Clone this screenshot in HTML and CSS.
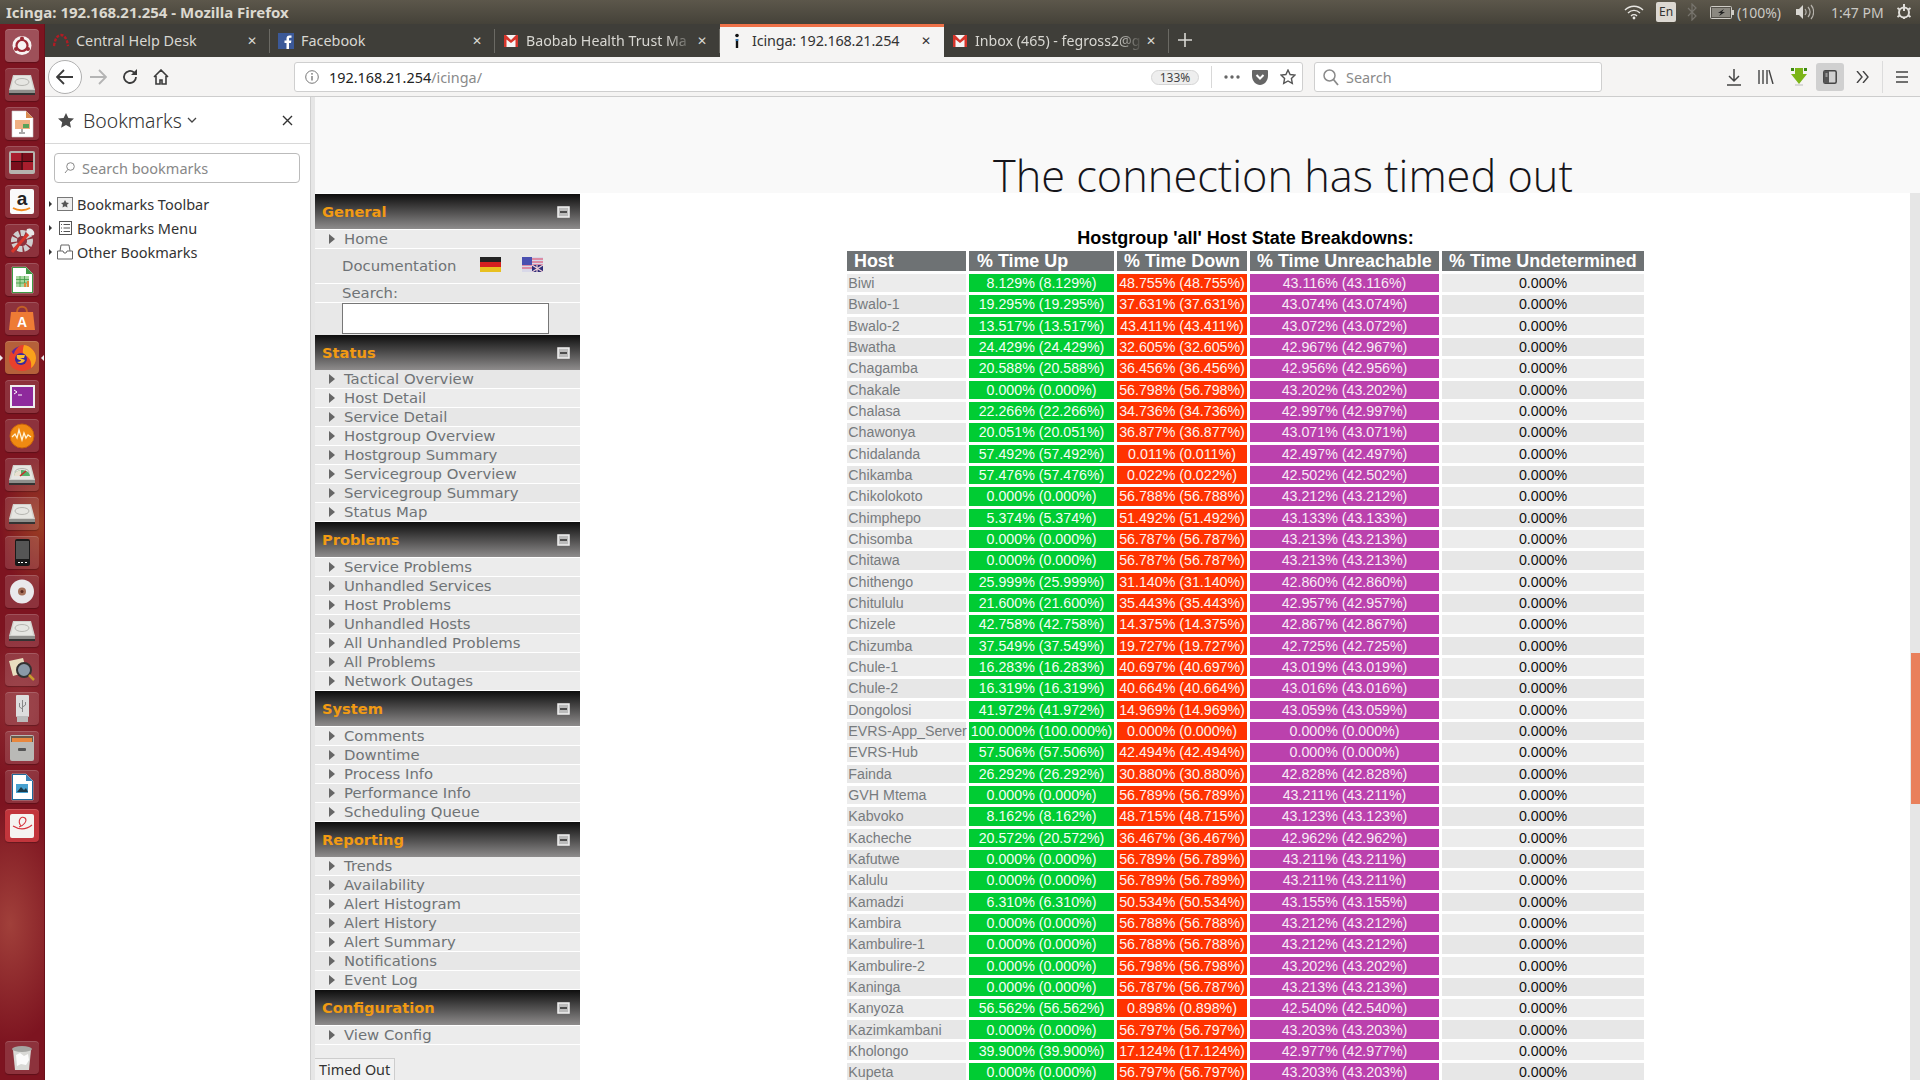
FILE: index.html
```html
<!DOCTYPE html>
<html lang="en">
<head>
  <meta charset="UTF-8" />
  <title>Icinga: 192.168.21.254 - Mozilla Firefox</title>
  <link rel="stylesheet" href="styles.css">
</head>
<body>

  <!-- shared launcher icons -->
  <svg class="defs" width="0" height="0">
    <symbol id="hdd" viewBox="0 0 34 33">
      <path d="M8 7h18l4 15v4H4v-4z" fill="#d2d2ce"/>
      <path d="M9 8h16l3 13H6z" fill="#e6e6e2"/>
      <ellipse cx="17" cy="14" rx="7" ry="3.5" fill="none" stroke="#b5b5b0"/>
      <path d="M4 22h26v4H4z" fill="#8f8f8c"/>
      <path d="M4 25h26v2H4z" fill="#333"/>
    </symbol>
    <symbol id="doc" viewBox="0 0 34 33">
      <path d="M7 4h14l7 7v19H7z" fill="#fff" stroke="#ccc" stroke-width=".6"/>
    </symbol>
  </svg>

  <!-- Top panel -->
  <div class="panel">
    <span class="panel-title">Icinga: 192.168.21.254 - Mozilla Firefox</span>
    <div class="indicators">
      <svg class="ind-wifi" width="20" height="16" viewBox="0 0 20 16"><path d="M1 6c5-5 13-5 18 0M4 9c3.500-3.500 8.500-3.500 12 0M7 12c1.700-1.700 4.300-1.700 6 0" fill="none" stroke="#e8e6e2" stroke-width="1.400"/><circle cx="10" cy="14" r="1.400" fill="#e8e6e2"/></svg>
      <span class="ind-lang">En</span>
      <svg class="ind-bt" width="10" height="18" viewBox="0 0 10 18"><path d="M1 5l8 8-4 4V1l4 4-8 8" fill="none" stroke="#77746d" stroke-width="1.200"/></svg>
      <svg class="ind-batt" width="24" height="13" viewBox="0 0 24 13"><rect x=".5" y=".5" width="21" height="12" rx="1" fill="#55524b" stroke="#cfccc6"/><rect x="2" y="2" width="18" height="9" fill="#8b8880"/><path d="M22 4h2v5h-2z" fill="#cfccc6"/><path d="M14 3L8 7h3l-2 3 6-4h-3z" fill="#222"/></svg>
      <span class="ind-pct">(100%)</span>
      <svg class="ind-vol" width="19" height="16" viewBox="0 0 19 16"><path d="M1 5h3l4-4v14l-4-4H1z" fill="#d8d6d1"/><path d="M10 5c1.500 2 1.500 4 0 6M13 3c2.500 3 2.500 7 0 10M16 1c3.500 4 3.500 10 0 14" fill="none" stroke="#b5b2ac" stroke-width="1.200"/></svg>
      <span class="ind-clock">1:47 PM</span>
      <svg class="ind-gear" width="16" height="16" viewBox="0 0 16 16"><circle cx="8" cy="8.500" r="5" fill="none" stroke="#e0ded9" stroke-width="2"/><path d="M8 0v7M1.500 4l2 1.500M14.500 4l-2 1.500M1.500 13l2-1.500M14.500 13l-2-1.500M8 15v-2" stroke="#e0ded9" stroke-width="2"/></svg>
    </div>
  </div>

  <div class="desktop">

    <!-- Launcher -->
    <div class="launcher">
      <div class="tile tile-bright"><svg viewBox="0 0 34 33"><circle cx="17" cy="16.500" r="9.500" fill="#f7f3f2"/><circle cx="17" cy="16.500" r="5.500" fill="none" stroke="#9c2a35" stroke-width="2.200"/><circle cx="17" cy="9.500" r="2" fill="#9c2a35"/><circle cx="11" cy="20" r="2" fill="#9c2a35"/><circle cx="23" cy="20" r="2" fill="#9c2a35"/></svg></div>
      <div class="tile"><svg viewBox="0 0 34 33"><use href="#hdd"/></svg></div>
      <div class="tile"><svg viewBox="0 0 34 33"><use href="#doc"/><path d="M21 4l7 7h-7z" fill="#d98a4f"/><path d="M10 13h15v9H10z" fill="#f0b183"/><path d="M18 17h6v4h-6z" fill="#5aa35a"/><path d="M17 22v3M14 26h6" stroke="#555"/></svg></div>
      <div class="tile"><svg viewBox="0 0 34 33"><rect x="4" y="5" width="26" height="23" rx="2" fill="#b5b3ae"/><rect x="6" y="7" width="22" height="17" fill="#7a0f1c"/><path d="M6 7h11v8H6zM18 16h10v8H18z" fill="#a81e2d"/><path d="M17 7v17M6 15.500h22" stroke="#2a0a0e" stroke-width="1"/></svg></div>
      <div class="tile"><svg viewBox="0 0 34 33"><rect x="5" y="4" width="24" height="25" rx="2" fill="#fafafa"/><text x="17" y="20" class="amazon-a">a</text><path d="M8 23c5 3 12 3 17 0" fill="none" stroke="#f08a1d" stroke-width="1.800"/></svg></div>
      <div class="tile"><svg viewBox="0 0 34 33"><circle cx="17" cy="17" r="8" fill="none" stroke="#cfcfcf" stroke-width="6" stroke-dasharray="4.500 1.500"/><path d="M7 28L24 9" stroke="#d8352a" stroke-width="3"/><path d="M22 5a5 5 0 0 1 7 6l-4 1-4-4z" fill="#e8e8e8"/></svg></div>
      <div class="tile"><svg viewBox="0 0 34 33"><use href="#doc"/><path d="M21 4l7 7h-7z" fill="#3f9a45"/><path d="M7 4h14v1H8v24h19V11h1v19H7z" fill="#3f9a45"/><path d="M11 13h13v11H11z" fill="#a8d8a0"/><path d="M11 16.500h13M11 20h13M15 13v11M19.500 13v11" stroke="#3f9a45" stroke-width=".8"/><path d="M19 24v-4h2v4zM22 24v-6h2v6z" fill="#e08a3c"/></svg></div>
      <div class="tile"><svg viewBox="0 0 34 33"><path d="M6 10h22l2 18H4z" fill="#ee7b35"/><path d="M12 10c0-7 10-7 10 0" fill="none" stroke="#c45f25" stroke-width="2"/><text x="17" y="25" class="store-a">A</text></svg></div>
      <div class="tile tile-active"><svg viewBox="0 0 34 33"><circle cx="17" cy="17" r="12" fill="#5a2a9c"/><path d="M17 4c8 0 14 6 14 13 0 8-6 13-14 13S4 25 4 18c0-3 1-6 3-8 0 2 1 3 2 3 1-4 4-8 8-9z" fill="#e8402c"/><path d="M19 4c7 1 12 7 12 13 0 4-2 8-5 10 1-6-1-11-7-13-2-2-1-7 0-10z" fill="#f9a11b"/><circle cx="16" cy="18" r="6" fill="#3b2a9c"/><path d="M12 14h8l-1 3h-4l5 2c-1 3-5 4-8 2 3 0 4-1 4-2-3 0-5-2-4-5z" fill="#fbc02d"/></svg></div>
      <div class="tile"><svg viewBox="0 0 34 33"><rect x="5" y="5" width="25" height="23" fill="#eee"/><rect x="7" y="7" width="21" height="19" fill="#8e2a9c"/><path d="M9 10l3 2-3 2M13 15h4" fill="none" stroke="#fff"/></svg></div>
      <div class="tile"><svg viewBox="0 0 34 33"><circle cx="17" cy="17" r="12" fill="#f08a12"/><circle cx="17" cy="17" r="12" fill="none" stroke="#c9620a"/><path d="M7 18l3-3 2 4 2-8 3 10 2-7 2 5 2-3 3 2" fill="none" stroke="#fff3d8" stroke-width="1.300"/></svg></div>
      <div class="tile"><svg viewBox="0 0 34 33"><use href="#hdd"/><path d="M9 18a8 6 0 0 1 16 0z" fill="#56b06a"/><path d="M9 18a8 6 0 0 1 7-6v6z" fill="#e8e0d0"/><path d="M15 18l6-5" stroke="#c92a2a" stroke-width="1.500"/></svg></div>
      <div class="tile"><svg viewBox="0 0 34 33"><use href="#hdd"/></svg></div>
      <div class="tile"><svg viewBox="0 0 34 33"><rect x="10" y="3" width="15" height="27" rx="2" fill="#1a1a1a"/><rect x="11" y="5" width="13" height="18" fill="#555"/><path d="M13 26h2v1h-2zM16 26h2v1h-2zM20 26h2v1h-2z" fill="#fff"/></svg></div>
      <div class="tile"><svg viewBox="0 0 34 33"><circle cx="17" cy="16.500" r="12" fill="#e9e9ec"/><circle cx="17" cy="16.500" r="4" fill="#a5705a"/><circle cx="17" cy="16.500" r="1.500" fill="#5a2a20"/></svg></div>
      <div class="tile"><svg viewBox="0 0 34 33"><use href="#hdd"/></svg></div>
      <div class="tile"><svg viewBox="0 0 34 33"><path d="M4 8l14-3 4 14-14 4z" fill="#e9dfc0"/><circle cx="19" cy="17" r="7" fill="#8a9aa8" stroke="#333" stroke-width="2"/><path d="M24 22l5 5" stroke="#c99a2e" stroke-width="2.500"/></svg></div>
      <div class="tile"><svg viewBox="0 0 34 33"><rect x="11" y="3" width="13" height="22" rx="1" fill="#ddd"/><rect x="12" y="24" width="11" height="6" fill="#bbb"/><path d="M17.500 8v12M14.500 11v4l3 2M20.500 10v3l-3 2" fill="none" stroke="#888"/></svg></div>
      <div class="tile"><svg viewBox="0 0 34 33"><rect x="5" y="4" width="24" height="26" rx="2" fill="#b9b9b6"/><path d="M6 5h22v6H6z" fill="#6b5a4a"/><path d="M7 7h20v4H7z" fill="#e8873e"/><rect x="13" y="17" width="8" height="3" rx="1" fill="#555"/></svg></div>
      <div class="tile"><svg viewBox="0 0 34 33"><use href="#doc"/><path d="M21 4l7 7h-7z" fill="#3a84b8"/><path d="M7 4h14v1H8v24h19V11h1v19H7z" fill="#1f6a9c"/><path d="M11 14h12v9H11z" fill="#46a0d0"/><path d="M12 22l4-5 3 3 2-2 2 4z" fill="#1c3a4a"/></svg></div>
      <div class="tile tile-red"><svg viewBox="0 0 34 33"><rect x="5" y="5" width="24" height="24" rx="2" fill="#f5f3f1"/><path d="M8 17c8 5 14 3 19-1M16 17c-4-5 0-11 4-8 3 3-2 8-6 9" fill="none" stroke="#d6303a" stroke-width="1.100"/></svg></div>
      <div class="tile tile-trash"><svg viewBox="0 0 34 33"><path d="M8 9h18l-2 20H10z" fill="#d9d9d6"/><ellipse cx="17" cy="8" rx="10" ry="3" fill="#a5a5a2"/><path d="M11 14l4-2 4 3 4-2 1 6-3 5-5-1-4 2z" fill="#fbfbfb"/></svg></div>
    </div>

    <div class="firefox">

      <!-- Tab strip -->
      <div class="tabbar">
        <div class="tab">
          <svg class="favicon" width="16" height="16" viewBox="0 0 16 16"><path d="M1 13C2 5 5 2 8 2s6 3 7 11" fill="none" stroke="#b01c24" stroke-width="2.400" stroke-dasharray="3 1.500"/></svg>
          <span class="tab-title">Central Help Desk</span>
          <span class="tab-close">✕</span>
        </div>
        <div class="tab">
          <svg class="favicon" width="16" height="16" viewBox="0 0 16 16"><rect width="16" height="16" fill="#3b5998"/><path d="M11 16v-6h2l.4-2.500H11V6c0-.8.300-1.200 1.200-1.200h1.300V2.500H11.500C9.500 2.500 8.500 3.700 8.500 5.600v1.900H6.500V10h2v6z" fill="#fff"/></svg>
          <span class="tab-title">Facebook</span>
          <span class="tab-close">✕</span>
        </div>
        <div class="tab">
          <svg class="favicon" width="16" height="16" viewBox="0 0 16 16"><rect x="1" y="2" width="14" height="12" fill="#f5f5f5"/><path d="M1 2h2l5 5 5-5h2v12h-2.500V6.500L8 10 3.500 6.500V14H1z" fill="#d6352b"/></svg>
          <span class="tab-title tab-fade">Baobab Health Trust Ma</span>
          <span class="tab-close">✕</span>
        </div>
        <div class="tab tab-current">
          <svg class="favicon" width="16" height="16" viewBox="0 0 16 16"><circle cx="8" cy="2.500" r="1.800" fill="#111"/><path d="M6.800 6h2.400v9H6.800z" fill="#111"/><path d="M6.800 6h2.400v2H6.800z" fill="#2a6fb0"/></svg>
          <span class="tab-title">Icinga: 192.168.21.254</span>
          <span class="tab-close">✕</span>
        </div>
        <div class="tab">
          <svg class="favicon" width="16" height="16" viewBox="0 0 16 16"><rect x="1" y="2" width="14" height="12" fill="#f5f5f5"/><path d="M1 2h2l5 5 5-5h2v12h-2.500V6.500L8 10 3.500 6.500V14H1z" fill="#d6352b"/></svg>
          <span class="tab-title tab-fade">Inbox (465) - fegross2@g</span>
          <span class="tab-close">✕</span>
        </div>
        <svg class="tab-new" width="14" height="14" viewBox="0 0 14 14"><path d="M7 0v14M0 7h14" stroke="#d9d8d3" stroke-width="1.600"/></svg>
      </div>

      <!-- Toolbar -->
      <div class="toolbar">
        <div class="nav-back"><svg width="18" height="16" viewBox="0 0 18 16"><path d="M8 1L1 8l7 7M1 8h16" fill="none" stroke="#3b3b3b" stroke-width="1.800"/></svg></div>
        <svg class="nav-icon" width="18" height="16" viewBox="0 0 18 16"><path d="M10 1l7 7-7 7M17 8H1" fill="none" stroke="#b4b4b4" stroke-width="1.800"/></svg>
        <svg class="nav-icon" width="16" height="16" viewBox="0 0 16 16"><path d="M14 8a6 6 0 1 1-2-4.500" fill="none" stroke="#3b3b3b" stroke-width="1.800"/><path d="M15 0v6H9z" fill="#3b3b3b"/></svg>
        <svg class="nav-icon" width="16" height="16" viewBox="0 0 16 16"><path d="M1 8l7-7 7 7M3 7v8h4v-4h2v4h4V7" fill="none" stroke="#3b3b3b" stroke-width="1.600"/></svg>

        <div class="urlbar">
          <svg class="url-info" width="14" height="14" viewBox="0 0 14 14"><circle cx="7" cy="7" r="6.300" fill="none" stroke="#777"/><path d="M7 6v4.500" stroke="#777" stroke-width="1.400"/><circle cx="7" cy="3.800" r=".9" fill="#777"/></svg>
          <span class="url-text">192.168.21.254<span class="url-path">/icinga/</span></span>
          <span class="url-zoom">133%</span>
          <span class="url-sep"></span>
          <svg class="url-dots" width="16" height="4" viewBox="0 0 16 4"><circle cx="2" cy="2" r="1.700" fill="#666"/><circle cx="8" cy="2" r="1.700" fill="#666"/><circle cx="14" cy="2" r="1.700" fill="#666"/></svg>
          <svg class="url-pocket" width="16" height="15" viewBox="0 0 16 15"><path d="M1 0h14a1 1 0 0 1 1 1v5c0 5-4 9-8 9S0 11 0 6V1a1 1 0 0 1 1-1z" fill="#666"/><path d="M4.500 5L8 8.500 11.500 5" fill="none" stroke="#fff" stroke-width="2"/></svg>
          <svg class="url-star" width="16" height="16" viewBox="0 0 16 16"><path d="M8 1l2.100 4.500 4.900.6-3.600 3.400.9 4.900L8 12l-4.300 2.400.9-4.900L1 6.100l4.900-.6z" fill="none" stroke="#555" stroke-width="1.400"/></svg>
        </div>

        <div class="searchbar">
          <svg width="16" height="17" viewBox="0 0 16 17"><circle cx="6.500" cy="6.500" r="5.500" fill="none" stroke="#8a8a8a" stroke-width="1.500"/><path d="M10.500 10.500L15 16" stroke="#8a8a8a" stroke-width="1.800"/></svg>
          <span>Search</span>
        </div>

        <div class="tools">
          <svg width="14" height="17" viewBox="0 0 14 17"><path d="M7 0v11M2 7l5 5 5-5M0 16h14" fill="none" stroke="#444" stroke-width="1.500"/></svg>
          <svg width="16" height="14" viewBox="0 0 16 14"><path d="M1 0v14M5 0v14M9 0v14M11 0l4 14" fill="none" stroke="#444" stroke-width="1.400"/></svg>
          <svg width="16" height="18" viewBox="0 0 16 18"><path d="M4 0h8v6h4l-8 10L0 6h4z" fill="#7cb518"/><path d="M0 0h3v3H0zM13 0h3v3h-3z" fill="#3d8a12"/><path d="M4 17h8" stroke="#bbb"/></svg>
          <span class="tool-on"><svg width="14" height="14" viewBox="0 0 14 14"><rect x=".8" y=".8" width="12.400" height="12.400" rx="1.500" fill="none" stroke="#444" stroke-width="1.500"/><path d="M1 1h5v12H1z" fill="#555"/><path d="M2.500 4h2M2.500 6h2" stroke="#ddd"/></svg></span>
          <svg width="13" height="12" viewBox="0 0 13 12"><path d="M1 0l5 6-5 6M7 0l5 6-5 6" fill="none" stroke="#444" stroke-width="1.400"/></svg>
          <span class="tool-sep"></span>
          <svg width="12" height="12" viewBox="0 0 12 12"><path d="M0 1h12M0 6h12M0 11h12" stroke="#444" stroke-width="1.500"/></svg>
        </div>
      </div>

      <div class="browser">

        <!-- Bookmarks sidebar -->
        <div class="sidebar">
          <div class="side-head">
            <svg width="16" height="15" viewBox="0 0 16 15"><path d="M8 0l2.400 5 5.600.6-4.100 3.700 1.100 5.500L8 12l-4.900 2.800 1.100-5.500L0 5.600 5.600 5z" fill="#4a4a4a"/></svg>
            <span class="side-title">Bookmarks</span>
            <svg class="side-chev" width="10" height="6" viewBox="0 0 10 6"><path d="M1 1l4 4 4-4" fill="none" stroke="#444" stroke-width="1.300"/></svg>
            <svg class="side-x" width="11" height="11" viewBox="0 0 11 11"><path d="M1 1l9 9M10 1l-9 9" stroke="#333" stroke-width="1.400"/></svg>
          </div>
          <div class="side-search">
            <svg width="11" height="12" viewBox="0 0 11 12"><circle cx="6.500" cy="4.500" r="3.800" fill="none" stroke="#888"/><path d="M3.800 7.500L1 11" stroke="#888"/></svg>
            <span>Search bookmarks</span>
          </div>
          <ul class="tree">
            <li><i class="tree-arrow"></i><svg width="16" height="14" viewBox="0 0 16 14"><rect x=".5" y=".5" width="15" height="13" fill="#eee" stroke="#777"/><path d="M8 3l1.300 2.500 2.700.4-2 1.900.5 2.700L8 9.200l-2.500 1.300.5-2.700-2-1.900 2.700-.4z" fill="#555"/></svg>Bookmarks Toolbar</li>
            <li><i class="tree-arrow"></i><svg width="16" height="14" viewBox="0 0 16 14"><rect x="2.500" y=".5" width="12" height="13" fill="#fff" stroke="#555"/><path d="M4 3.500h1M6.500 3.500H13M4 7h1M6.500 7H13M4 10.500h1M6.500 10.500H13" stroke="#555"/></svg>Bookmarks Menu</li>
            <li><i class="tree-arrow"></i><svg width="16" height="16" viewBox="0 0 16 16"><path d="M4 1h8l1 6h2.500v8H.5V7H3zM3 7h3l1 2h2l1-2h3" fill="none" stroke="#666"/></svg>Other Bookmarks</li>
          </ul>
        </div>
        <div class="splitter"></div>

        <div class="content">
          <div class="error-band"><h1>The connection has timed out</h1></div>

          <div class="frames">
            <!-- Icinga side menu -->
            <div class="menu">
              <div class="menu-head">General<svg width="13" height="12" viewBox="0 0 13 12"><rect x="1" y="1" width="11" height="10" fill="#bbb" stroke="#f2f2f2" stroke-width="1.500"/><path d="M3 6h7" stroke="#333" stroke-width="1.600"/></svg></div>
              <div class="menu-row"><i></i>Home</div>
              <div class="menu-row doc-row"><span>Documentation</span>
                <svg class="flag" width="21" height="15" viewBox="0 0 21 15"><path d="M0 0h21v5H0z" fill="#222"/><path d="M0 5h21v5H0z" fill="#d42020"/><path d="M0 10h21v5H0z" fill="#e8c020"/></svg>
                <svg class="flag" width="21" height="15" viewBox="0 0 21 15"><path d="M0 0h21v15H0z" fill="#d8d8e8"/><path d="M0 2h21M0 5h21M0 8h21M0 11h21" stroke="#e04060" stroke-width="1.200"/><path d="M0 0h10v8H0z" fill="#4a50b0"/><path d="M10 8h11v7H10z" fill="#30307a"/><path d="M10 8l11 7M21 8l-11 7M15 8v7" stroke="#f0d0d8" stroke-width="1.200"/></svg>
              </div>
              <div class="menu-row search-label"><span>Search:</span></div>
              <div class="menu-input"><input type="text"></div>

              <div class="menu-head menu-head-tight">Status<svg width="13" height="12" viewBox="0 0 13 12"><rect x="1" y="1" width="11" height="10" fill="#bbb" stroke="#f2f2f2" stroke-width="1.500"/><path d="M3 6h7" stroke="#333" stroke-width="1.600"/></svg></div>
              <div class="menu-row"><i></i>Tactical Overview</div>
              <div class="menu-row"><i></i>Host Detail</div>
              <div class="menu-row"><i></i>Service Detail</div>
              <div class="menu-row"><i></i>Hostgroup Overview</div>
              <div class="menu-row"><i></i>Hostgroup Summary</div>
              <div class="menu-row"><i></i>Servicegroup Overview</div>
              <div class="menu-row"><i></i>Servicegroup Summary</div>
              <div class="menu-row"><i></i>Status Map</div>

              <div class="menu-head">Problems<svg width="13" height="12" viewBox="0 0 13 12"><rect x="1" y="1" width="11" height="10" fill="#bbb" stroke="#f2f2f2" stroke-width="1.500"/><path d="M3 6h7" stroke="#333" stroke-width="1.600"/></svg></div>
              <div class="menu-row"><i></i>Service Problems</div>
              <div class="menu-row"><i></i>Unhandled Services</div>
              <div class="menu-row"><i></i>Host Problems</div>
              <div class="menu-row"><i></i>Unhandled Hosts</div>
              <div class="menu-row"><i></i>All Unhandled Problems</div>
              <div class="menu-row"><i></i>All Problems</div>
              <div class="menu-row"><i></i>Network Outages</div>

              <div class="menu-head">System<svg width="13" height="12" viewBox="0 0 13 12"><rect x="1" y="1" width="11" height="10" fill="#bbb" stroke="#f2f2f2" stroke-width="1.500"/><path d="M3 6h7" stroke="#333" stroke-width="1.600"/></svg></div>
              <div class="menu-row"><i></i>Comments</div>
              <div class="menu-row"><i></i>Downtime</div>
              <div class="menu-row"><i></i>Process Info</div>
              <div class="menu-row"><i></i>Performance Info</div>
              <div class="menu-row"><i></i>Scheduling Queue</div>

              <div class="menu-head menu-head-tight">Reporting<svg width="13" height="12" viewBox="0 0 13 12"><rect x="1" y="1" width="11" height="10" fill="#bbb" stroke="#f2f2f2" stroke-width="1.500"/><path d="M3 6h7" stroke="#333" stroke-width="1.600"/></svg></div>
              <div class="menu-row"><i></i>Trends</div>
              <div class="menu-row"><i></i>Availability</div>
              <div class="menu-row"><i></i>Alert Histogram</div>
              <div class="menu-row"><i></i>Alert History</div>
              <div class="menu-row"><i></i>Alert Summary</div>
              <div class="menu-row"><i></i>Notifications</div>
              <div class="menu-row"><i></i>Event Log</div>

              <div class="menu-head">Configuration<svg width="13" height="12" viewBox="0 0 13 12"><rect x="1" y="1" width="11" height="10" fill="#bbb" stroke="#f2f2f2" stroke-width="1.500"/><path d="M3 6h7" stroke="#333" stroke-width="1.600"/></svg></div>
              <div class="menu-row"><i></i>View Config</div>

              <div class="menu-fill"><span class="status-tab">Timed Out</span></div>
            </div>

            <!-- Availability report -->
            <div class="report">
              <div class="report-title">Hostgroup 'all' Host State Breakdowns:</div>
              <table class="avail">
                <colgroup><col class="c-host"><col class="c-up"><col class="c-down"><col class="c-unreach"><col class="c-undet"></colgroup>
                <thead><tr><th>Host</th><th>% Time Up</th><th>% Time Down</th><th>% Time Unreachable</th><th>% Time Undetermined</th></tr></thead>
                <tbody>
                  <tr><td>Biwi</td><td class="up">8.129% (8.129%)</td><td class="down">48.755% (48.755%)</td><td class="unreach">43.116% (43.116%)</td><td class="undet">0.000%</td></tr>
                  <tr><td>Bwalo-1</td><td class="up">19.295% (19.295%)</td><td class="down">37.631% (37.631%)</td><td class="unreach">43.074% (43.074%)</td><td class="undet">0.000%</td></tr>
                  <tr><td>Bwalo-2</td><td class="up">13.517% (13.517%)</td><td class="down">43.411% (43.411%)</td><td class="unreach">43.072% (43.072%)</td><td class="undet">0.000%</td></tr>
                  <tr><td>Bwatha</td><td class="up">24.429% (24.429%)</td><td class="down">32.605% (32.605%)</td><td class="unreach">42.967% (42.967%)</td><td class="undet">0.000%</td></tr>
                  <tr><td>Chagamba</td><td class="up">20.588% (20.588%)</td><td class="down">36.456% (36.456%)</td><td class="unreach">42.956% (42.956%)</td><td class="undet">0.000%</td></tr>
                  <tr><td>Chakale</td><td class="up">0.000% (0.000%)</td><td class="down">56.798% (56.798%)</td><td class="unreach">43.202% (43.202%)</td><td class="undet">0.000%</td></tr>
                  <tr><td>Chalasa</td><td class="up">22.266% (22.266%)</td><td class="down">34.736% (34.736%)</td><td class="unreach">42.997% (42.997%)</td><td class="undet">0.000%</td></tr>
                  <tr><td>Chawonya</td><td class="up">20.051% (20.051%)</td><td class="down">36.877% (36.877%)</td><td class="unreach">43.071% (43.071%)</td><td class="undet">0.000%</td></tr>
                  <tr><td>Chidalanda</td><td class="up">57.492% (57.492%)</td><td class="down">0.011% (0.011%)</td><td class="unreach">42.497% (42.497%)</td><td class="undet">0.000%</td></tr>
                  <tr><td>Chikamba</td><td class="up">57.476% (57.476%)</td><td class="down">0.022% (0.022%)</td><td class="unreach">42.502% (42.502%)</td><td class="undet">0.000%</td></tr>
                  <tr><td>Chikolokoto</td><td class="up">0.000% (0.000%)</td><td class="down">56.788% (56.788%)</td><td class="unreach">43.212% (43.212%)</td><td class="undet">0.000%</td></tr>
                  <tr><td>Chimphepo</td><td class="up">5.374% (5.374%)</td><td class="down">51.492% (51.492%)</td><td class="unreach">43.133% (43.133%)</td><td class="undet">0.000%</td></tr>
                  <tr><td>Chisomba</td><td class="up">0.000% (0.000%)</td><td class="down">56.787% (56.787%)</td><td class="unreach">43.213% (43.213%)</td><td class="undet">0.000%</td></tr>
                  <tr><td>Chitawa</td><td class="up">0.000% (0.000%)</td><td class="down">56.787% (56.787%)</td><td class="unreach">43.213% (43.213%)</td><td class="undet">0.000%</td></tr>
                  <tr><td>Chithengo</td><td class="up">25.999% (25.999%)</td><td class="down">31.140% (31.140%)</td><td class="unreach">42.860% (42.860%)</td><td class="undet">0.000%</td></tr>
                  <tr><td>Chitululu</td><td class="up">21.600% (21.600%)</td><td class="down">35.443% (35.443%)</td><td class="unreach">42.957% (42.957%)</td><td class="undet">0.000%</td></tr>
                  <tr><td>Chizele</td><td class="up">42.758% (42.758%)</td><td class="down">14.375% (14.375%)</td><td class="unreach">42.867% (42.867%)</td><td class="undet">0.000%</td></tr>
                  <tr><td>Chizumba</td><td class="up">37.549% (37.549%)</td><td class="down">19.727% (19.727%)</td><td class="unreach">42.725% (42.725%)</td><td class="undet">0.000%</td></tr>
                  <tr><td>Chule-1</td><td class="up">16.283% (16.283%)</td><td class="down">40.697% (40.697%)</td><td class="unreach">43.019% (43.019%)</td><td class="undet">0.000%</td></tr>
                  <tr><td>Chule-2</td><td class="up">16.319% (16.319%)</td><td class="down">40.664% (40.664%)</td><td class="unreach">43.016% (43.016%)</td><td class="undet">0.000%</td></tr>
                  <tr><td>Dongolosi</td><td class="up">41.972% (41.972%)</td><td class="down">14.969% (14.969%)</td><td class="unreach">43.059% (43.059%)</td><td class="undet">0.000%</td></tr>
                  <tr><td>EVRS-App_Server</td><td class="up">100.000% (100.000%)</td><td class="down">0.000% (0.000%)</td><td class="unreach">0.000% (0.000%)</td><td class="undet">0.000%</td></tr>
                  <tr><td>EVRS-Hub</td><td class="up">57.506% (57.506%)</td><td class="down">42.494% (42.494%)</td><td class="unreach">0.000% (0.000%)</td><td class="undet">0.000%</td></tr>
                  <tr><td>Fainda</td><td class="up">26.292% (26.292%)</td><td class="down">30.880% (30.880%)</td><td class="unreach">42.828% (42.828%)</td><td class="undet">0.000%</td></tr>
                  <tr><td>GVH Mtema</td><td class="up">0.000% (0.000%)</td><td class="down">56.789% (56.789%)</td><td class="unreach">43.211% (43.211%)</td><td class="undet">0.000%</td></tr>
                  <tr><td>Kabvoko</td><td class="up">8.162% (8.162%)</td><td class="down">48.715% (48.715%)</td><td class="unreach">43.123% (43.123%)</td><td class="undet">0.000%</td></tr>
                  <tr><td>Kacheche</td><td class="up">20.572% (20.572%)</td><td class="down">36.467% (36.467%)</td><td class="unreach">42.962% (42.962%)</td><td class="undet">0.000%</td></tr>
                  <tr><td>Kafutwe</td><td class="up">0.000% (0.000%)</td><td class="down">56.789% (56.789%)</td><td class="unreach">43.211% (43.211%)</td><td class="undet">0.000%</td></tr>
                  <tr><td>Kalulu</td><td class="up">0.000% (0.000%)</td><td class="down">56.789% (56.789%)</td><td class="unreach">43.211% (43.211%)</td><td class="undet">0.000%</td></tr>
                  <tr><td>Kamadzi</td><td class="up">6.310% (6.310%)</td><td class="down">50.534% (50.534%)</td><td class="unreach">43.155% (43.155%)</td><td class="undet">0.000%</td></tr>
                  <tr><td>Kambira</td><td class="up">0.000% (0.000%)</td><td class="down">56.788% (56.788%)</td><td class="unreach">43.212% (43.212%)</td><td class="undet">0.000%</td></tr>
                  <tr><td>Kambulire-1</td><td class="up">0.000% (0.000%)</td><td class="down">56.788% (56.788%)</td><td class="unreach">43.212% (43.212%)</td><td class="undet">0.000%</td></tr>
                  <tr><td>Kambulire-2</td><td class="up">0.000% (0.000%)</td><td class="down">56.798% (56.798%)</td><td class="unreach">43.202% (43.202%)</td><td class="undet">0.000%</td></tr>
                  <tr><td>Kaninga</td><td class="up">0.000% (0.000%)</td><td class="down">56.787% (56.787%)</td><td class="unreach">43.213% (43.213%)</td><td class="undet">0.000%</td></tr>
                  <tr><td>Kanyoza</td><td class="up">56.562% (56.562%)</td><td class="down">0.898% (0.898%)</td><td class="unreach">42.540% (42.540%)</td><td class="undet">0.000%</td></tr>
                  <tr><td>Kazimkambani</td><td class="up">0.000% (0.000%)</td><td class="down">56.797% (56.797%)</td><td class="unreach">43.203% (43.203%)</td><td class="undet">0.000%</td></tr>
                  <tr><td>Kholongo</td><td class="up">39.900% (39.900%)</td><td class="down">17.124% (17.124%)</td><td class="unreach">42.977% (42.977%)</td><td class="undet">0.000%</td></tr>
                  <tr><td>Kupeta</td><td class="up">0.000% (0.000%)</td><td class="down">56.797% (56.797%)</td><td class="unreach">43.203% (43.203%)</td><td class="undet">0.000%</td></tr>
                </tbody>
              </table>
            </div>

            <div class="scroll-track"><div class="scroll-thumb"></div></div>
          </div>
        </div>
      </div>
    </div>
  </div>

</body>
</html>
```

FILE: styles.css
```css
* {
  box-sizing: border-box;
}

html, body {
  margin: 0;
  width: 1920px;
  height: 1080px;
  overflow: hidden;
}

body {
  display: flex;
  flex-direction: column;
  font-family: 'Noto Sans', sans-serif;
  background: #fff;
}

.defs {
  position: absolute;
}

/* Top panel */
.panel {
  height: 24px;
  flex: none;
  display: flex;
  align-items: center;
  justify-content: space-between;
  padding-left: 6px;
  background: linear-gradient(to bottom, #5c574b, #454239);
}

.panel-title {
  font-size: 15px;
  font-weight: 700;
  color: #dcd9d0;
}

.indicators {
  display: flex;
  align-items: center;
  color: #cbc9c4;
  font-size: 14px;
}

.ind-lang {
  width: 20px;
  height: 20px;
  margin-left: 12px;
  border-radius: 2px;
  background: #dcd8d2;
  color: #333;
  font-size: 12px;
  text-align: center;
  line-height: 20px;
}

.ind-bt { margin-left: 11px; }
.ind-batt { margin-left: 13px; }
.ind-pct { margin-left: 3px; width: 46px; }
.ind-vol { margin-left: 12px; }
.ind-clock { margin-left: 17px; width: 53px; white-space: nowrap; }
.ind-gear { margin: 0 8px 0 12px; }

.desktop {
  flex: 1;
  display: flex;
  min-height: 0;
}

/* Launcher */
.launcher {
  width: 45px;
  flex: none;
  display: flex;
  flex-direction: column;
  gap: 6px;
  padding: 5px 0 6px 5px;
  background:
    radial-gradient(ellipse 40px 70px at 40px 500px, rgba(190, 110, 40, 0.45), transparent),
    radial-gradient(ellipse 60px 120px at 10px 900px, rgba(190, 100, 80, 0.55), transparent),
    radial-gradient(ellipse 50px 80px at 20px 680px, rgba(200, 120, 110, 0.25), transparent),
    #7d1420;
  border-right: 1px solid #6a1019;
}

.tile {
  position: relative;
  width: 34px;
  height: 33px;
  flex: none;
  border-radius: 4px;
  background: rgba(255, 255, 255, 0.13);
  box-shadow: inset 0 1px 0 rgba(255, 255, 255, 0.16), 0 1px 1px rgba(0, 0, 0, 0.25);
}

.tile svg {
  display: block;
  width: 34px;
  height: 33px;
}

.tile-bright { background: rgba(255, 255, 255, 0.26); }
.tile-active { background: #b5603a; }
.tile-red { background: #c2353c; }
.tile-trash { margin-top: auto; }

.tile-active::before,
.tile-active::after {
  content: "";
  position: absolute;
  top: 14px;
  border: 3px solid transparent;
}

.tile-active::before {
  left: -5px;
  border-left-color: #eee;
}

.tile-active::after {
  right: -5px;
  border-right-color: #eee;
}

.amazon-a {
  font: 700 19px 'Liberation Sans', sans-serif;
  text-anchor: middle;
  fill: #222;
}

.store-a {
  font: 700 14px 'Liberation Sans', sans-serif;
  text-anchor: middle;
  fill: #fff;
}

.firefox {
  flex: 1;
  min-width: 0;
  display: flex;
  flex-direction: column;
}

/* Tabs */
.tabbar {
  height: 33px;
  flex: none;
  display: flex;
  align-items: stretch;
  background: #3f3e39;
}

.tab {
  width: 225px;
  flex: none;
  display: flex;
  align-items: center;
  padding: 0 12px 0 8px;
  color: #d8d7d2;
  font-size: 14.4px;
  position: relative;
}

.tab::after {
  content: "";
  position: absolute;
  right: 0;
  top: 5px;
  bottom: 4px;
  width: 1px;
  background: #6b6a64;
}

.tab-current {
  width: 224px;
  padding: 0 12px 3px 9px;
  background: #f5f4f3;
  border-top: 3px solid #ee7148;
  color: #333;
  letter-spacing: -0.17px;
}

.tab-current::after { display: none; }

.favicon {
  flex: none;
  margin-right: 7px;
}

.tab-title {
  flex: 1;
  overflow: hidden;
  white-space: nowrap;
}

.tab-fade {
  margin-right: 2px;
  font-size: 14.2px;
  -webkit-mask-image: linear-gradient(to right, #000 84%, transparent);
  mask-image: linear-gradient(to right, #000 84%, transparent);
}

.tab-close {
  flex: none;
  width: 12px;
  font-size: 12px;
  text-align: center;
}

.tab-new {
  margin: 9px 0 0 9px;
}

/* Toolbar */
.toolbar {
  height: 40px;
  flex: none;
  display: flex;
  align-items: center;
  padding: 1px 0 0 3px;
  background: #f5f4f3;
  border-bottom: 1px solid #cdcdcd;
}

.nav-back {
  width: 34px;
  height: 34px;
  flex: none;
  display: flex;
  align-items: center;
  justify-content: center;
  border: 1px solid #b0b0b0;
  border-radius: 50%;
  background: #fff;
}

.nav-icon {
  flex: none;
  margin-left: 15px;
}

.nav-back + .nav-icon { margin-left: 7px; }

.urlbar {
  width: 1009px;
  height: 30px;
  flex: none;
  margin-left: 125px;
  display: flex;
  align-items: center;
  padding: 0 6px 0 10px;
  background: #fff;
  border: 1px solid #cfcfcf;
  border-radius: 3px;
  font-size: 14.4px;
}

.url-text {
  margin-left: 10px;
  flex: 1;
  color: #222;
}

.url-path { color: #8a8a8a; }

.url-zoom {
  width: 48px;
  height: 15px;
  border: 1px solid #d5d5d5;
  border-radius: 8px;
  background: #eee;
  color: #444;
  font-size: 12px;
  line-height: 13px;
  text-align: center;
}

.url-sep {
  width: 1px;
  height: 22px;
  margin: 0 12px;
  background: #d8d8d8;
}

.url-pocket { margin-left: 12px; }
.url-star { margin-left: 12px; }

.searchbar {
  width: 288px;
  height: 30px;
  flex: none;
  margin-left: 11px;
  display: flex;
  align-items: center;
  gap: 7px;
  padding-left: 8px;
  background: #fff;
  border: 1px solid #cfcfcf;
  border-radius: 3px;
  color: #8a8a8a;
  font-size: 14.4px;
}

.tools {
  flex: 1;
  display: flex;
  align-items: center;
  gap: 17px;
  padding-left: 125px;
}

.tool-on {
  width: 28px;
  height: 28px;
  margin: 0 -5px 0 -8px;
  display: flex;
  align-items: center;
  justify-content: center;
  border-radius: 3px;
  background: #d0d0d0;
}

.tool-sep {
  width: 1px;
  height: 32px;
  margin: 0 -4px;
  background: #dcdcdc;
}

.browser {
  flex: 1;
  min-height: 0;
  display: flex;
}

/* Bookmarks sidebar */
.sidebar {
  width: 265px;
  flex: none;
  background: #fff;
  color: #333;
}

.side-head {
  height: 47px;
  display: flex;
  align-items: center;
  padding-left: 13px;
  border-bottom: 1px solid #d8d8d8;
}

.side-title {
  margin-left: 9px;
  font-size: 19.4px;
  font-weight: 300;
  color: #333;
}

.side-chev { margin-left: 5px; }
.side-x { margin-left: 85px; }

.side-search {
  height: 30px;
  margin: 9px 10px 0 9px;
  display: flex;
  align-items: center;
  gap: 7px;
  padding-left: 9px;
  border: 1px solid #bbb;
  border-radius: 4px;
  color: #888;
  font-size: 14.5px;
}

.tree {
  list-style: none;
  margin: 9px 0 0;
  padding: 0;
  font-size: 14.5px;
}

.tree li {
  height: 24px;
  display: flex;
  align-items: center;
  padding-left: 4px;
}

.tree svg { margin-right: 4px; }

.tree-arrow {
  width: 0;
  height: 0;
  margin-right: 5px;
  border: 3.5px solid transparent;
  border-left: 3px solid #333;
  border-right: 0;
}

.splitter {
  width: 5px;
  flex: none;
  background: #e6e6e6;
  border-left: 1px solid #cfcfcf;
}

.content {
  flex: 1;
  min-width: 0;
  display: flex;
  flex-direction: column;
}

.error-band {
  height: 96px;
  flex: none;
  overflow: hidden;
  padding: 61px 0 0 678px;
  background: #f9f9f9;
}

.error-band h1 {
  margin: 0;
  font-family: 'Open Sans', sans-serif;
  font-size: 43.3px;
  font-weight: 300;
  line-height: 35px;
  color: #15141a;
  white-space: nowrap;
}

.frames {
  flex: 1;
  min-height: 0;
  display: flex;
}

/* Icinga menu */
.menu {
  width: 265px;
  flex: none;
  display: flex;
  flex-direction: column;
  padding-top: 1px;
  font-family: 'DejaVu Sans', sans-serif;
  font-size: 14.85px;
  color: #6f7376;
}

.menu-head {
  height: 35px;
  flex: none;
  margin-bottom: 1px;
  display: flex;
  align-items: center;
  justify-content: space-between;
  padding: 0 10px 0 7px;
  background: linear-gradient(to bottom, #0e0e0e, #8e8c8c);
  color: #f19a13;
  font-size: 14.67px;
  font-weight: 700;
}

.menu-head-tight { margin-bottom: 0; }

.menu-row {
  height: 18px;
  flex: none;
  margin-bottom: 1px;
  display: flex;
  align-items: center;
  padding-left: 14px;
  background: #ececec;
  white-space: nowrap;
}

.menu-row:nth-child(odd) { background: #e7e7e7; }

.menu-row i {
  width: 0;
  height: 0;
  margin-right: 9px;
  border: 5px solid transparent;
  border-left: 6px solid #666;
  border-right: 0;
}

.doc-row {
  height: 34px;
  padding: 0 0 1px 27px;
  background: #e8e8e8;
}

.flag {
  margin: 0 0 3px 24px;
}

.flag + .flag { margin-left: 21px; }

.search-label {
  padding-left: 27px;
  background: #e8e8e8;
}

.menu-input {
  height: 32px;
  flex: none;
  padding-left: 27px;
  background: #e8e8e8;
}

.menu-input input {
  display: block;
  width: 207px;
  height: 31px;
  padding: 0;
  border: 1px solid #777;
  background: #fff;
}

.menu-fill {
  flex: 1;
  display: flex;
  align-items: flex-end;
  background: #ededed;
}

.status-tab {
  width: 80px;
  height: 22px;
  padding-left: 4px;
  background: #f2f2f2;
  border: 1px solid #cdcdcd;
  border-width: 1px 1px 0 0;
  font-family: 'Noto Sans', sans-serif;
  font-size: 14.4px;
  line-height: 21px;
  color: #333;
}

/* Report */
.report {
  flex: 1;
  min-width: 0;
  padding-left: 267px;
  overflow: hidden;
  font-family: 'Liberation Sans', sans-serif;
}

.report-title {
  width: 797px;
  margin-top: 35px;
  font-size: 18px;
  font-weight: 700;
  line-height: 21px;
  color: #000;
  text-align: center;
}

.avail {
  table-layout: fixed;
  width: 803px;
  margin: -1px 0 0 -3px;
  border-collapse: separate;
  border-spacing: 3px;
  font-size: 14.22px;
}

.c-host { width: 119px; }
.c-up { width: 145px; }
.c-down { width: 130px; }
.c-unreach { width: 189px; }
.c-undet { width: 202px; }

.avail th {
  height: 20px;
  padding: 0 0 0 7px;
  background: #6e7274;
  color: #fff;
  font-size: 17.9px;
  line-height: 20px;
  text-align: left;
  white-space: nowrap;
}

.avail th:nth-child(2) { padding-left: 8px; }

.avail td {
  height: 18.33px;
  padding: 0;
  background: #ececec;
  color: #777b7e;
  line-height: 18px;
  text-align: center;
  white-space: nowrap;
}

.avail td:first-child {
  padding-left: 1.3px;
  text-align: left;
}

.avail tr:nth-child(even) td { background: #e7e7e7; }

.avail tr td.up { background: #00cc33; color: #f4fff6; }
.avail tr td.down { background: #ff3300; color: #fff4f0; }
.avail tr td.unreach { background: #bb41ad; color: #f8ecf6; }
.avail tr td.undet { color: #111; }

.scroll-track {
  width: 10px;
  flex: none;
  background: #e6e6e6;
}

.scroll-thumb {
  height: 151px;
  margin: 460px 0 0 1px;
  background: #e9805b;
}
```
